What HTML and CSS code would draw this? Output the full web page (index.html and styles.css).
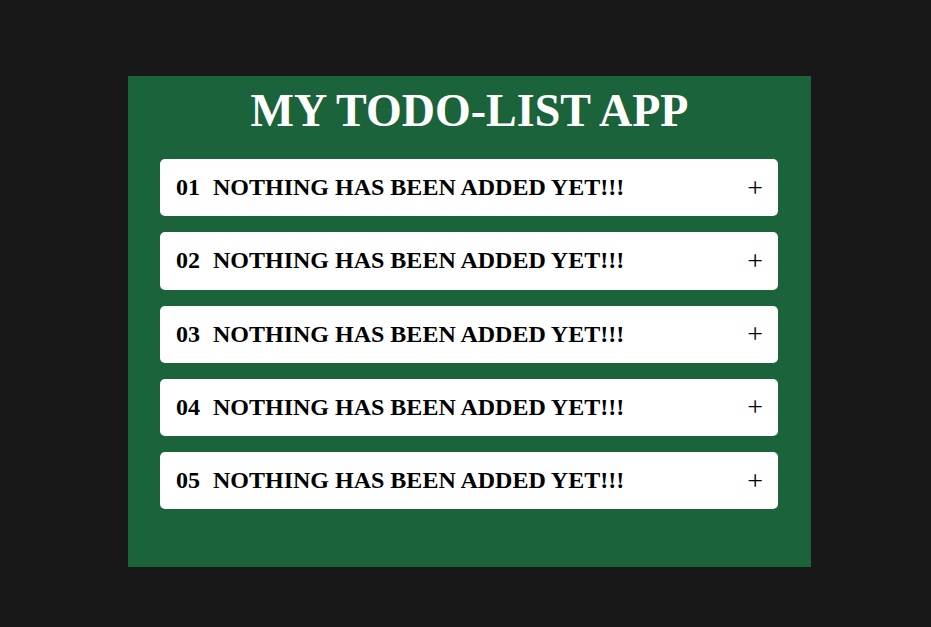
FILE: index.html
```html
<!DOCTYPE html>
<html>
<head>
<meta charset="utf-8">
<link rel="stylesheet" href="styles.css">
</head>
<body>
<main class="app">
  <h1 class="title">MY TODO-LIST APP</h1>
  <ul class="list">
    <li class="item"><span class="num">01</span><span class="text">NOTHING HAS BEEN ADDED YET!!!</span><span class="add">+</span></li>
    <li class="item"><span class="num">02</span><span class="text">NOTHING HAS BEEN ADDED YET!!!</span><span class="add">+</span></li>
    <li class="item"><span class="num">03</span><span class="text">NOTHING HAS BEEN ADDED YET!!!</span><span class="add">+</span></li>
    <li class="item"><span class="num">04</span><span class="text">NOTHING HAS BEEN ADDED YET!!!</span><span class="add">+</span></li>
    <li class="item"><span class="num">05</span><span class="text">NOTHING HAS BEEN ADDED YET!!!</span><span class="add">+</span></li>
  </ul>
</main>
</body>
</html>
```

FILE: styles.css
```css
html, body {
  margin: 0;
  background: #181818;
}
body {
  padding: 76px 0 0 128px;
  font-family: "Liberation Serif", "Times New Roman", serif;
}
.app {
  width: 683px;
  height: 491px;
  box-sizing: border-box;
  background: #1b633b;
  padding: 8px 32px 0 32px;
}
.title {
  margin: 0 0 21px;
  height: 54px;
  font-size: 46px;
  font-weight: bold;
  color: #ffffff;
  text-align: center;
  line-height: 54px;
}
.list {
  list-style: none;
  margin: 0;
  padding: 0;
  display: flex;
  flex-direction: column;
  gap: 16px;
}
.item {
  width: 618px;
  height: 57.25px;
  box-sizing: border-box;
  background: #ffffff;
  border-radius: 5px;
  display: flex;
  align-items: center;
  padding: 0 15px 0 16px;
  font-size: 24px;
  color: #000000;
}
.num {
  font-weight: bold;
  margin-right: 13px;
}
.text {
  font-weight: bold;
  flex: 1;
}
.add {
  font-weight: normal;
  font-size: 28px;
  line-height: 1;
}
```
